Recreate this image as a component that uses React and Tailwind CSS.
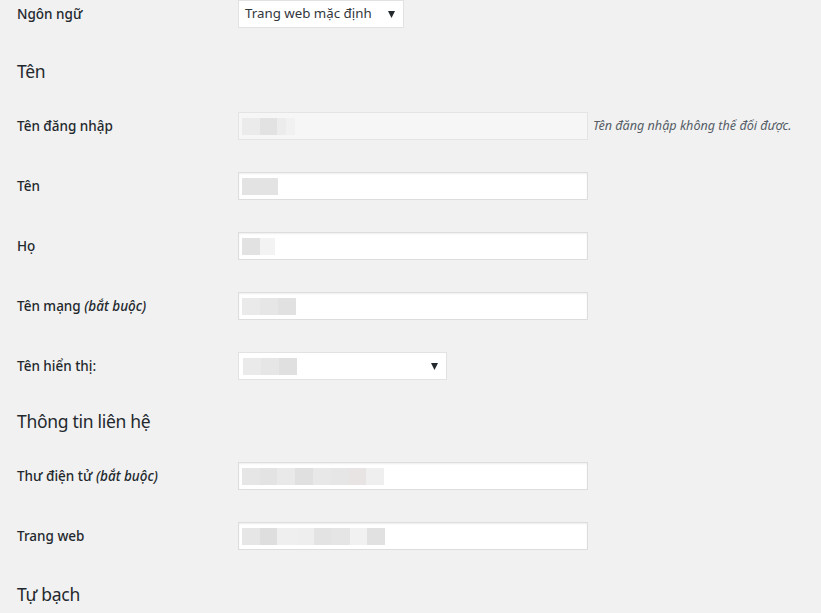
import React from 'react';

// pixelated stand-ins for the blurred personal data
function Blur({ blocks, h = 'h-[17px]' }) {
  return (
    <div className={`flex ${h}`}>
      {blocks.map(([w, c], i) => (
        <div key={i} style={{ width: w, backgroundColor: c }} />
      ))}
    </div>
  );
}

function Arrow() {
  return (
    <svg width="7" height="7" viewBox="0 0 7 7" className="shrink-0">
      <path d="M0 0 H7 L3.5 7 Z" fill="#23282d" />
    </svg>
  );
}

function Label({ children }) {
  return (
    <div className="w-[238px] shrink-0 pl-[17px] text-[13.5px] font-medium text-[#23282d]">
      {children}
    </div>
  );
}

function Input({ blocks, readOnly }) {
  return (
    <div
      className={`w-[350px] h-[28px] flex items-center pl-[3px] border ${
        readOnly
          ? 'bg-[#f6f6f6] border-[#e4e4e4]'
          : 'bg-white border-[#dddddd] shadow-[inset_0_1px_2px_rgba(0,0,0,0.07)]'
      }`}
    >
      <Blur blocks={blocks} />
    </div>
  );
}

function Row({ label, children }) {
  return (
    <div className="h-[60px] flex items-center">
      <Label>{label}</Label>
      {children}
    </div>
  );
}

function Heading({ children, className }) {
  return (
    <div className={`flex items-center pl-[17px] ${className}`}>
      <h2 className="text-[17.5px] tracking-[-0.3px] text-[#23282d] font-normal">{children}</h2>
    </div>
  );
}

export default function App() {
  return (
    <div
      className="w-[821px] h-[613px] overflow-hidden bg-[#f1f1f1]"
      style={{ fontFamily: '"Noto Sans", "Open Sans", sans-serif' }}
    >
      <div className="h-[28px] flex items-center">
        <Label>Ngôn ngữ</Label>
        <div className="w-[166px] h-[28px] bg-white border border-[#e2e2e2] flex items-center justify-between pl-[6px] pr-[8px] text-[13.3px] text-[#32373c]">
          <span>Trang web mặc định</span>
          <Arrow />
        </div>
      </div>

      <Heading className="h-[68px] pt-[18px]">Tên</Heading>

      <Row label="Tên đăng nhập">
        <Input
          readOnly
          blocks={[[18, '#ebebeb'], [17, '#e2e2e2'], [9, '#ececec'], [9, '#f1f1f1']]}
        />
        <span className="ml-[5px] text-[12.6px] italic text-[#555d66]">
          Tên đăng nhập không thể đổi được.
        </span>
      </Row>

      <Row label="Tên">
        <Input blocks={[[36, '#e3e3e3']]} />
      </Row>

      <Row label="Họ">
        <Input blocks={[[18, '#e2e2e2'], [15, '#f3f3f3']]} />
      </Row>

      <Row label={<>Tên mạng <i>(bắt buộc)</i></>}>
        <Input blocks={[[18, '#eaeaea'], [18, '#e6e6e6'], [18, '#e1e1e1']]} />
      </Row>

      <Row label="Tên hiển thị:">
        <div className="w-[209px] h-[28px] bg-white border border-[#e2e2e2] flex items-center justify-between pl-[4px] pr-[8px]">
          <Blur blocks={[[18, '#eaeaea'], [18, '#e6e6e6'], [18, '#e0e0e0']]} />
          <Arrow />
        </div>
      </Row>

      <Heading className="h-[50px]">Thông tin liên hệ</Heading>

      <Row label={<>Thư điện tử <i>(bắt buộc)</i></>}>
        <Input
          blocks={[
            [18, '#e6e6e6'], [17, '#e3e3e3'], [18, '#e9e9e9'], [18, '#e0e0e0'],
            [18, '#e8e8e8'], [18, '#e6e6e6'], [17, '#e8e4e4'], [18, '#efefef'],
          ]}
        />
      </Row>

      <Row label="Trang web">
        <Input
          blocks={[
            [18, '#e6e6e6'], [17, '#dedede'], [20, '#efefef'], [17, '#eeeeee'],
            [18, '#e3e3e3'], [18, '#e5e5e5'], [17, '#f1f1f1'], [18, '#e1e1e1'],
          ]}
        />
      </Row>

      <Heading className="h-[56px]">Tự bạch</Heading>
    </div>
  );
}
